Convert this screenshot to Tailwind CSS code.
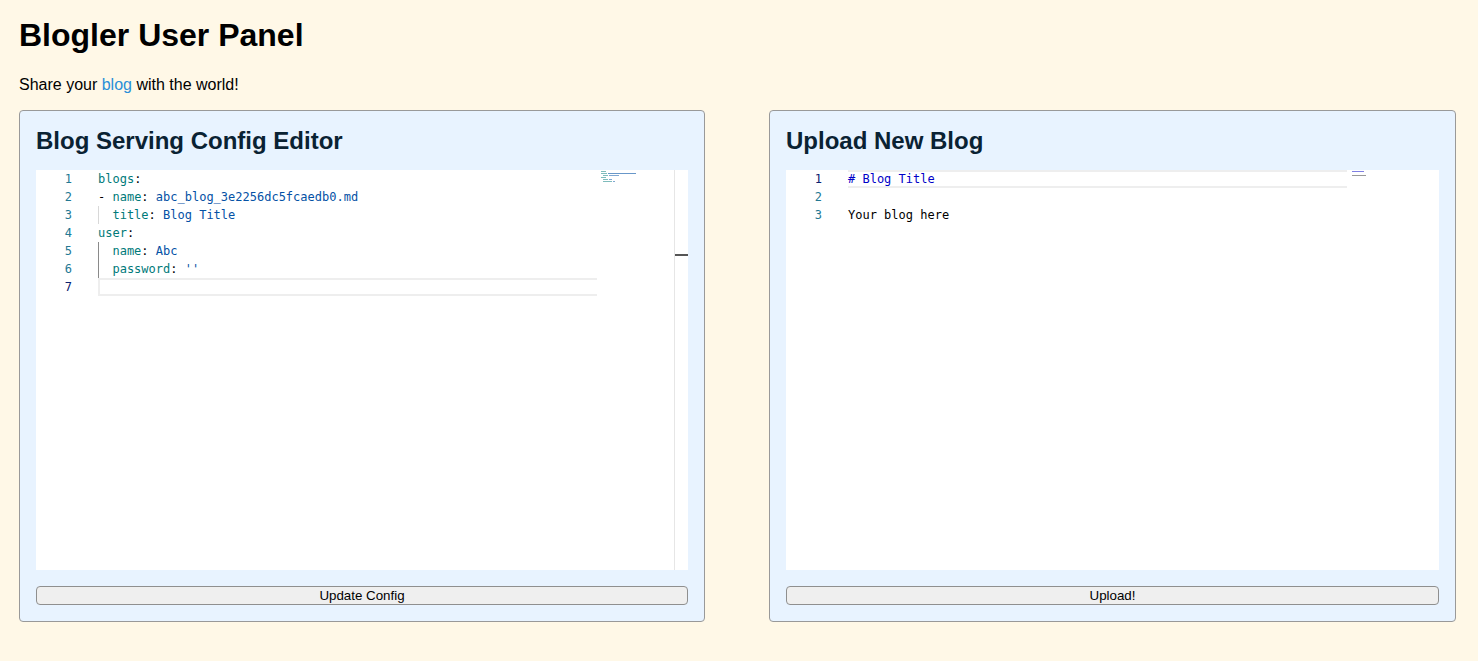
<!DOCTYPE html>
<html>
<head>
<meta charset="utf-8">
<script src="https://cdn.jsdelivr.net/npm/@tailwindcss/browser@4"></script>
</head>
<body class="bg-[#fff8e7] text-black font-['Liberation_Sans',Arial,sans-serif] h-[661px] overflow-hidden">
<div class="pl-[19px] pr-[22px] pt-[17px]">
  <h1 class="text-[32px] leading-[37px] font-bold">Blogler User Panel</h1>
  <p class="mt-[22px] text-[16px] leading-[18px] h-[34px]">Share your <a class="text-[#2a8fd8]">blog</a> with the world!</p>
  <div class="grid grid-cols-[686px_687px] gap-x-[64px]">

    <section class="bg-[#e8f3ff] border border-[#999] rounded-[4px] h-[512px] px-[16px] flex flex-col">
      <h2 class="text-[24px] leading-[28px] font-bold text-[#0a2233] mt-[16px] h-[43px]">Blog Serving Config Editor</h2>
      <div class="bg-white h-[400px] flex font-['DejaVu_Sans_Mono',monospace] text-[12px] leading-[18px]">
        <div class="w-[36px] text-right text-[#237893] shrink-0">
          <div>1</div><div>2</div><div>3</div><div>4</div><div>5</div><div>6</div><div class="text-[#0b216f]">7</div>
        </div>
        <div class="flex-1 ml-[26px] text-[#007a7a]">
          <div class="whitespace-pre">blogs<span class="text-black">:</span></div>
          <div class="whitespace-pre"><span class="text-black">- </span>name<span class="text-black">: </span><span class="text-[#0451a5]">abc_blog_3e2256dc5fcaedb0.md</span></div>
          <div class="relative whitespace-pre"><span class="absolute left-0 top-0 h-[18px] w-px bg-[#d8d8d8]"></span>  title<span class="text-black">: </span><span class="text-[#0451a5]">Blog Title</span></div>
          <div class="whitespace-pre">user<span class="text-black">:</span></div>
          <div class="relative whitespace-pre"><span class="absolute left-0 top-0 h-[18px] w-px bg-[#8a8a8a]"></span>  name<span class="text-black">: </span><span class="text-[#0451a5]">Abc</span></div>
          <div class="relative whitespace-pre"><span class="absolute left-0 top-0 h-[18px] w-px bg-[#8a8a8a]"></span>  password<span class="text-black">: </span><span class="text-[#0451a5]">''</span></div>
          <div class="h-[18px] border-y-2 border-l-2 border-[#eeeeee]"></div>
        </div>
        <div class="w-[77px] shrink-0 pl-[4px] pt-[1px] flex flex-col gap-px" aria-hidden="true">
          <div class="w-[5px] h-px bg-[#007a7a]/50"></div>
          <div class="flex gap-px"><div class="w-[6px] h-px bg-[#007a7a]/50"></div><div class="w-[28px] h-px bg-[#0451a5]/60"></div></div>
          <div class="flex gap-px ml-[2px]"><div class="w-[5px] h-px bg-[#007a7a]/50"></div><div class="w-[10px] h-px bg-[#0451a5]/50"></div></div>
          <div class="w-[5px] h-px bg-[#007a7a]/50"></div>
          <div class="flex gap-px ml-[2px]"><div class="w-[5px] h-px bg-[#007a7a]/50"></div><div class="w-[3px] h-px bg-[#0451a5]/50"></div></div>
          <div class="flex gap-px ml-[2px]"><div class="w-[9px] h-px bg-[#007a7a]/50"></div><div class="w-[2px] h-px bg-[#0451a5]/50"></div></div>
        </div>
        <div class="w-[14px] shrink-0 border-l border-[#e6e6e6] pt-[84px]"><div class="h-[2px] bg-[#555]"></div></div>
      </div>
      <button class="mt-[16px] h-[19px] w-full bg-[#efefef] border border-[#8f8f8f] rounded-[4px] text-[13.33px] leading-[16px] text-black">Update Config</button>
    </section>

    <section class="bg-[#e8f3ff] border border-[#999] rounded-[4px] h-[512px] px-[16px] flex flex-col">
      <h2 class="text-[24px] leading-[28px] font-bold text-[#0a2233] mt-[16px] h-[43px]">Upload New Blog</h2>
      <div class="bg-white h-[400px] flex font-['DejaVu_Sans_Mono',monospace] text-[12px] leading-[18px]">
        <div class="w-[36px] text-right text-[#237893] shrink-0">
          <div class="text-[#0b216f]">1</div><div>2</div><div>3</div>
        </div>
        <div class="flex-1 ml-[26px] text-black">
          <div class="h-[18px] border-y-2 border-[#eeeeee] text-[#0000c8] whitespace-pre leading-[14px]"># Blog Title</div>
          <div class="h-[18px]"></div>
          <div class="whitespace-pre">Your blog here</div>
        </div>
        <div class="w-[92px] shrink-0 pl-[5px] pt-[1px] flex flex-col gap-[2px]" aria-hidden="true">
          <div class="w-[12px] h-px bg-[#0000c8]/50"></div>
          <div class="w-[14px] h-px bg-black/40 mt-[1px]"></div>
        </div>
      </div>
      <button class="mt-[16px] h-[19px] w-full bg-[#efefef] border border-[#8f8f8f] rounded-[4px] text-[13.33px] leading-[16px] text-black">Upload!</button>
    </section>
  </div>
</div>
</body>
</html>
